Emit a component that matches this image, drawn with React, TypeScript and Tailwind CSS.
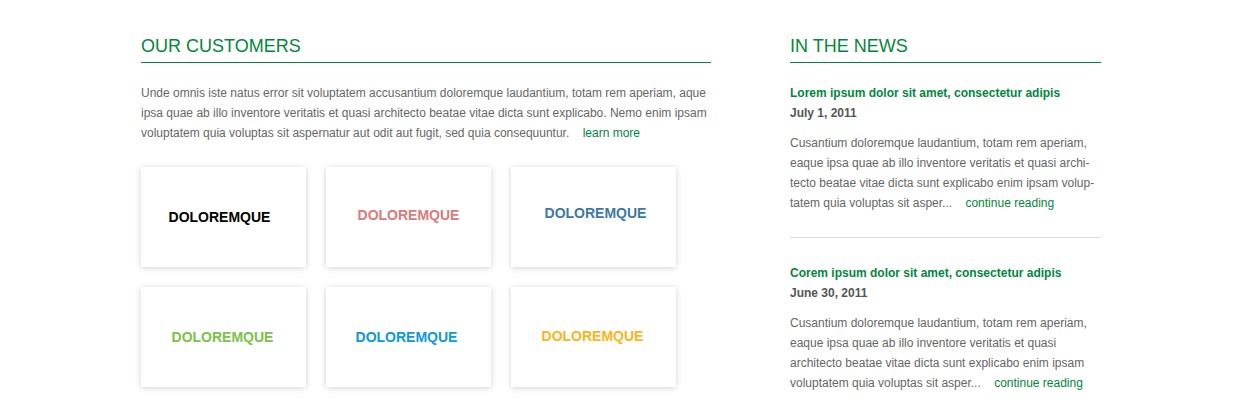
const customers = [
  { name: 'DOLOREMQUE', color: 'text-black', nudge: '-translate-x-1' },
  { name: 'DOLOREMQUE', color: 'text-[#d77b7b]', nudge: '-translate-y-0.5' },
  { name: 'DOLOREMQUE', color: 'text-[#3b78a5]', nudge: 'translate-x-0.5 -translate-y-1' },
  { name: 'DOLOREMQUE', color: 'text-[#7bc14a]', nudge: '-translate-x-px' },
  { name: 'DOLOREMQUE', color: 'text-[#0b99d9]', nudge: '-translate-x-0.5' },
  { name: 'DOLOREMQUE', color: 'text-[#fbb41a]', nudge: '-translate-x-px -translate-y-px' },
];

const news = [
  {
    title: 'Lorem ipsum dolor sit amet, consectetur adipis',
    date: 'July 1, 2011',
    body: 'Cusantium doloremque laudantium, totam rem aperiam, eaque ipsa quae ab illo inventore veritatis et quasi archi\u00ADtecto beatae vitae dicta sunt explicabo enim ipsam volup\u00ADtatem quia voluptas sit asper...',
  },
  {
    title: 'Corem ipsum dolor sit amet, consectetur adipis',
    date: 'June 30, 2011',
    body: 'Cusantium doloremque laudantium, totam rem aperiam, eaque ipsa quae ab illo inventore veritatis et quasi architecto beatae vitae dicta sunt explicabo enim ipsam voluptatem quia voluptas sit asper...',
  },
];

function Heading({ children }: { children: React.ReactNode }) {
  return (
    <h2 className="text-[18px] leading-6 pb-1 border-b border-[#00873d] text-[#00873d] font-normal">
      {children}
    </h2>
  );
}

export default function App() {
  return (
    <div className="w-[1251px] h-[411px] overflow-hidden bg-white font-['Liberation_Sans',Arial,sans-serif]">
      <div className="flex pl-[141px] pt-[34px]">
        <section className="w-[570px]">
          <Heading>OUR CUSTOMERS</Heading>
          <p className="mt-5 text-[12px] leading-5 text-[#666]">
            Unde omnis iste natus error sit voluptatem accusantium doloremque laudantium, totam rem aperiam, aque
            ipsa quae ab illo inventore veritatis et quasi architecto beatae vitae dicta sunt explicabo. Nemo enim ipsam
            voluptatem quia voluptas sit aspernatur aut odit aut fugit, sed quia consequuntur.{' '}
            <a href="#" className="ml-2.5 text-[#00873d]">learn more</a>
          </p>
          <div className="mt-6 grid grid-cols-[165px_165px_165px] gap-5">
            {customers.map((c, i) => (
              <div
                key={i}
                className="h-[100px] bg-white shadow-[0_1px_6px_rgba(0,0,0,0.18)] flex items-center justify-center"
              >
                <span className={`text-[14px] font-bold ${c.color} ${c.nudge}`}>{c.name}</span>
              </div>
            ))}
          </div>
        </section>

        <section className="w-[311px] ml-[79px]">
          <Heading>IN THE NEWS</Heading>
          <div className="mt-5">
            {news.map((n, i) => (
              <article
                key={i}
                className={i === 0 ? 'pb-6 border-b border-[#dddddd]' : 'pt-[25px]'}
              >
                <h3 className="text-[12px] leading-5 font-bold text-[#00873d]">{n.title}</h3>
                <div className="text-[12px] leading-5 font-bold text-[#555]">{n.date}</div>
                <p className="mt-2.5 text-[12px] leading-5 text-[#666] hyphens-manual">
                  {n.body}{' '}
                  <a href="#" className="ml-2.5 text-[#00873d]">continue reading</a>
                </p>
              </article>
            ))}
          </div>
        </section>
      </div>
    </div>
  );
}
